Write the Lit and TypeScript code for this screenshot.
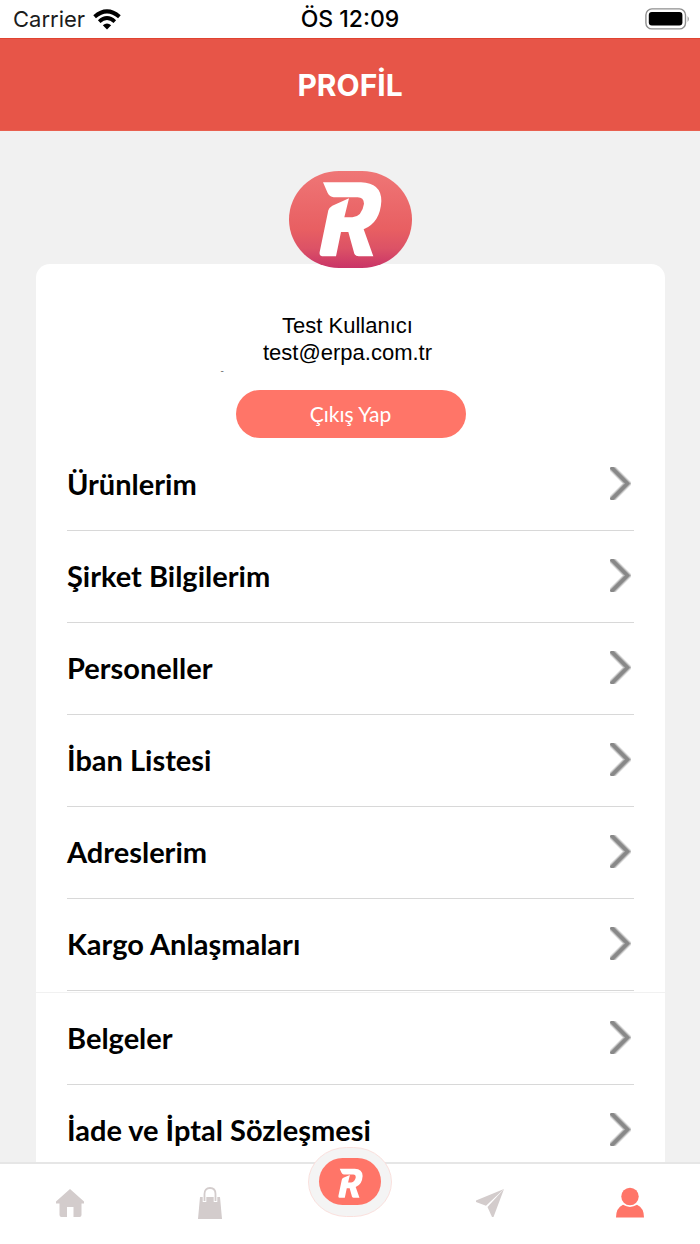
import { LitElement, html, css, svg } from "lit";
import { customElement, property } from "lit/decorators.js";

const letterMark = svg`<path d="M158 66H272Q333 68 333 122Q330 186 280 207L309 288H265Q256 288 252 280L234 215H212L197 288H155Q146 286 148 275L174 150Q176 142 186 136L236 114L222 171H246Q275 168 281 130Q280 111 262 111H190Q178 109 172 98Z" fill="#fff"/>`;

const sections: string[][] = [
  ["Ürünlerim", "Şirket Bilgilerim", "Personeller", "İban Listesi", "Adreslerim", "Kargo Anlaşmaları"],
  ["Belgeler", "İade ve İptal Sözleşmesi"],
];

@customElement("status-bar")
export class StatusBar extends LitElement {
  static styles = css`
    :host {
      display: grid;
      grid-template-columns: 1fr auto 1fr;
      align-items: center;
      height: 38px;
      padding: 0 10px;
      box-sizing: border-box;
      background: #fff;
      color: #000;
      font: 400 22px/28px Inter, sans-serif;
    }
    .carrier { display: flex; align-items: center; gap: 8px; padding-left: 3px; color: #1c1c1c; }
    .time { font-size: 23px; font-weight: 500; }
    .battery { justify-self: end; }
    svg { display: block; }
  `;
  render() {
    return html`
      <div class="carrier">
        <span>Carrier</span>
        <svg width="28" height="21" viewBox="0 0 28 21" aria-hidden="true">
          <g fill="none" stroke="#000" stroke-width="4">
            <path d="M1.6 7.8Q14 -3 26.4 7.8" />
            <path d="M6.2 12.6Q14 5.6 21.8 12.6" stroke-width="3.8" />
          </g>
          <path d="M9.8 16.2Q14 12.8 18.2 16.2L14 20.4Z" />
        </svg>
      </div>
      <div class="time">ÖS 12:09</div>
      <svg class="battery" width="45" height="22" viewBox="0 0 45 22" aria-hidden="true">
        <rect x="0.9" y="0.9" width="39.6" height="20" rx="6" fill="none" stroke="#8f8f8f" stroke-width="1.4" />
        <rect x="3.8" y="4" width="33.6" height="13.6" rx="3" />
        <path d="M42.6 8Q45 11 42.6 14Z" fill="#8f8f8f" />
      </svg>
    `;
  }
}

@customElement("menu-row")
export class MenuRow extends LitElement {
  @property() label = "";
  static styles = css`
    :host { display: block; }
    .row {
      display: flex;
      align-items: center;
      justify-content: space-between;
      height: 92px;
      box-sizing: border-box;
      padding: 0 3px 2px 0;
      border-bottom: 1px solid #d8d8d8;
      color: #000;
      text-decoration: none;
      font: 700 29px/36px Lato, sans-serif;
    }
    svg { display: block; }
  `;
  render() {
    return html`
      <a class="row" href="#">
        <span>${this.label}</span>
        <svg width="21" height="33" viewBox="0 0 21 33" aria-hidden="true">
          <g fill="none" stroke="#808080">
            <path d="M1 0L17.5 16.5L1 33" stroke-width="7" opacity="0.25" />
            <path d="M1 0L17.5 16.5L1 33" stroke-width="5.4" opacity="0.45" />
            <path d="M1 0L17.5 16.5L1 33" stroke-width="3.4" opacity="0.85" />
          </g>
        </svg>
      </a>
    `;
  }
}

@customElement("tab-bar")
export class TabBar extends LitElement {
  static styles = css`
    :host { display: block; }
    .tabs {
      display: grid;
      grid-template-columns: repeat(5, 1fr);
      height: 82px;
      box-sizing: border-box;
      border-top: 2px solid #e6e6e6;
      padding-bottom: 2px;
      background: #fff;
      color: #d3cccc;
    }
    .tab { display: flex; align-items: center; justify-content: center; color: inherit; }
    .active { color: #ff7568; }
    .center { align-items: flex-start; }
    .badge { margin-top: -17px; }
    svg { display: block; }
  `;
  render() {
    return html`
      <nav class="tabs">
        <a class="tab" href="#" aria-label="Ana Sayfa">
          <svg width="28" height="32" viewBox="0 0 28 32" fill="currentColor">
            <path d="M14 2L28 14.5V16.5H25.5V28Q25.5 30 23.5 30H17.5V20H11V30H5.5Q3.5 30 3.5 28V16.5H0V14.5Z" />
          </svg>
        </a>
        <a class="tab" href="#" aria-label="Siparişler">
          <svg width="24" height="32" viewBox="0 0 24 32">
            <path d="M2 10H22L24 32H0Z" fill="currentColor" />
            <path d="M6.5 15V7Q6.5 1 12 1Q17.5 1 17.5 7V15" fill="none" stroke="#fff" stroke-width="3.6" />
            <path d="M6.5 14V7Q6.5 1 12 1Q17.5 1 17.5 7V14" fill="none" stroke="currentColor" stroke-width="1.8" />
          </svg>
        </a>
        <a class="tab center" href="#" aria-label="R">
          <svg class="badge" width="84" height="70" viewBox="0 0 84 70">
            <rect x="0.5" y="0.5" width="83" height="69" rx="38" ry="34.5" fill="#f4f4f4" stroke="#fae0dd" />
            <rect x="11" y="11" width="62" height="47" rx="23.5" fill="#ff7568" />
            <g transform="translate(11 13) scale(0.131)">${letterMark}</g>
          </svg>
        </a>
        <a class="tab" href="#" aria-label="Gönder">
          <svg width="28" height="28" viewBox="0 0 28 28" fill="currentColor">
            <path d="M28 0L0 11.5V13L10 16.8Z" />
            <path d="M28 0L11.5 18L16 28H17.5Z" />
          </svg>
        </a>
        <a class="tab active" href="#" aria-label="Profil" aria-current="page">
          <svg width="28" height="32" viewBox="0 0 28 32" fill="currentColor">
            <circle cx="14" cy="9.5" r="8.7" />
            <path d="M0 30.5Q0 21 7 17.8Q14 22 21 17.8Q28 21 28 30.5Z" />
          </svg>
        </a>
      </nav>
    `;
  }
}

@customElement("app-root")
export class AppRoot extends LitElement {
  static styles = css`
    :host {
      display: flex;
      flex-direction: column;
      height: 100vh;
      overflow: hidden;
      background: #f1f1f1;
    }
    .header {
      flex: none;
      display: flex;
      align-items: center;
      justify-content: center;
      height: 93px;
      box-sizing: border-box;
      background: #e75548;
      border-top: 1px solid #e04330;
      border-bottom: 1px solid #e8604f;
    }
    .title { margin: 0; color: #fff; font: 700 30px/36px Inter, sans-serif; }
    .content { flex: 1; min-height: 0; overflow: hidden; padding: 40px 35px 0 36px; }
    .avatar { display: block; position: relative; margin: 0 auto -4px; }
    .card { background: #fff; border-radius: 14px; padding-top: 48px; }
    .user {
      width: 254px;
      margin: 0 auto;
      padding-right: 6px;
      text-align: center;
      color: #000;
      font: 400 22px/27px "Liberation Sans", sans-serif;
    }
    .line { margin: 0; }
    .phone { margin: 0; text-align: left; color: #777; font-size: 10px; line-height: 10px; }
    .logout {
      display: block;
      width: 230px;
      height: 48px;
      margin: 14px auto 1px;
      padding: 0;
      border: 0;
      border-radius: 24px;
      background: #ff7568;
      color: #fff;
      font: 400 21px/28px Lato, sans-serif;
    }
    .section { padding: 0 31px 1px; }
    .section + .section { border-top: 1px solid #f1f1f1; }
    status-bar, tab-bar { flex: none; }
  `;
  render() {
    return html`
      <status-bar></status-bar>
      <header class="header"><h1 class="title">PROFİL</h1></header>
      <main class="content">
        <svg class="avatar" width="123" height="97" viewBox="56 32 369 291" aria-hidden="true">
          <defs>
            <linearGradient id="glow" x1="0" y1="0" x2="0" y2="1">
              <stop offset="0" stop-color="#ef7676" />
              <stop offset="0.6" stop-color="#e85f62" />
              <stop offset="0.8" stop-color="#dc5266" />
              <stop offset="1" stop-color="#c93467" />
            </linearGradient>
          </defs>
          <rect x="56" y="32" width="369" height="291" rx="150" ry="145.5" fill="url(#glow)" />
          ${letterMark}
        </svg>
        <div class="card">
          <div class="user">
            <p class="line">Test Kullanıcı</p>
            <p class="line">test@erpa.com.tr</p>
            <p class="phone">-</p>
          </div>
          <button class="logout" type="button">Çıkış Yap</button>
          ${sections.map(
            (rows) => html`<div class="section">${rows.map((label) => html`<menu-row .label=${label}></menu-row>`)}</div>`
          )}
        </div>
      </main>
      <tab-bar></tab-bar>
    `;
  }
}
